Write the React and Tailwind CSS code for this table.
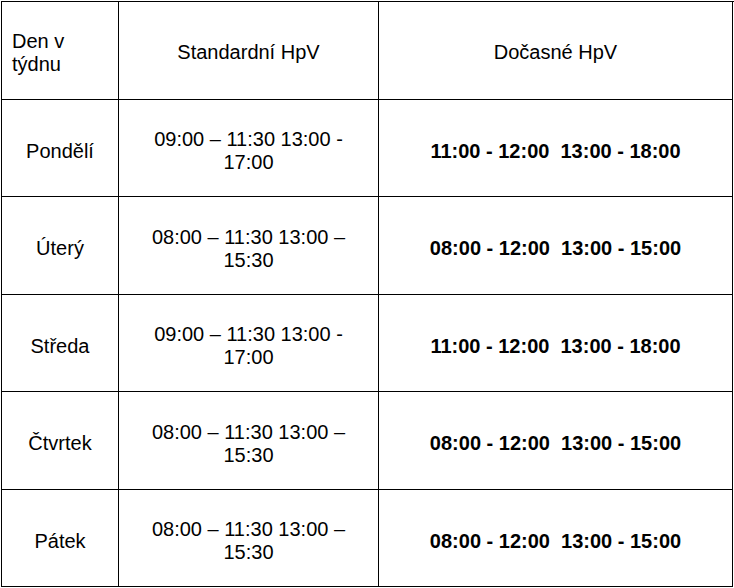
import React from "react";

const rows = [
  { day: "Pondělí", std: "09:00 – 11:30 13:00 - 17:00", tmp: "11:00 - 12:00  13:00 - 18:00", h: "h-[97px]" },
  { day: "Úterý", std: "08:00 – 11:30 13:00 – 15:30", tmp: "08:00 - 12:00  13:00 - 15:00", h: "h-[98px]" },
  { day: "Středa", std: "09:00 – 11:30 13:00 - 17:00", tmp: "11:00 - 12:00  13:00 - 18:00", h: "h-[97px]" },
  { day: "Čtvrtek", std: "08:00 – 11:30 13:00 – 15:30", tmp: "08:00 - 12:00  13:00 - 15:00", h: "h-[98px]" },
  { day: "Pátek", std: "08:00 – 11:30 13:00 – 15:30", tmp: "08:00 - 12:00  13:00 - 15:00", h: "h-[97px]" },
];

export default function App() {
  return (
    <div className="w-[734px] h-[588px] bg-white pt-px pl-px text-black" style={{ fontFamily: '"Liberation Sans", Arial, sans-serif' }}>
      <div className="grid grid-cols-[117px_260px_354px] border-t border-l border-black text-[20px] leading-[23px]">
        <div className="h-[98px] border-r border-b border-black flex items-center px-[10px] pt-[4px]">Den v týdnu</div>
        <div className="h-[98px] border-r border-b border-black flex items-center justify-center pt-[4px]">Standardní HpV</div>
        <div className="h-[98px] border-r border-b border-black flex items-center justify-center pt-[4px]">Dočasné HpV</div>
        {rows.map((r) => (
          <React.Fragment key={r.day}>
            <div className={`${r.h} border-r border-b border-black flex items-center justify-center pt-[6px]`}>{r.day}</div>
            <div className={`${r.h} border-r border-b border-black flex items-center justify-center text-center px-[12px] pt-[6px]`}>{r.std}</div>
            <div className={`${r.h} border-r border-b border-black flex items-center justify-center font-bold whitespace-pre pt-[6px]`}>{r.tmp}</div>
          </React.Fragment>
        ))}
      </div>
    </div>
  );
}
